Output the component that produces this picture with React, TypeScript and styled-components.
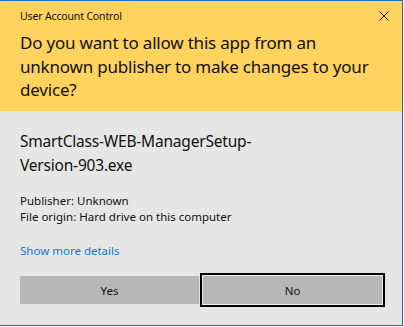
import React from 'react';
import styled, { createGlobalStyle } from 'styled-components';

const GlobalStyle = createGlobalStyle`
  html, body {
    margin: 0;
    padding: 0;
    background: #ffffff;
  }
  body {
    font-family: "Noto Sans", "Open Sans", sans-serif;
    color: #000;
  }
`;

const Page = styled.div`
  width: 404px;
  height: 327px;
  overflow: hidden;
`;

const Window = styled.div`
  width: 403px;
  height: 326px;
  box-sizing: border-box;
  border-top: 1px solid #1a6fc4;
  border-right: 1px solid #1a6fc4;
  border-bottom: 1px solid #1a6fc4;
  display: flex;
  flex-direction: column;
  background: #e6e6e6;
`;

const Header = styled.header`
  background: #ffd35e;
  height: 110px;
  display: flex;
  flex-direction: column;
`;

const TitleBar = styled.div`
  height: 30px;
  display: flex;
  align-items: center;
  justify-content: space-between;
  padding-left: 20px;
`;

const Title = styled.span`
  font-size: 10.5px;
  letter-spacing: -0.15px;
  color: #111;
`;

const CloseButton = styled.button`
  width: 36px;
  height: 30px;
  border: none;
  background: transparent;
  padding: 0;
  display: flex;
  align-items: center;
  justify-content: center;
`;

const Headline = styled.h1`
  margin: 0;
  padding: 0 18px 0 20px;
  font-size: 17px;
  font-weight: normal;
  letter-spacing: -0.2px;
  line-height: 23.5px;
  color: #111;
`;

const Body = styled.main`
  flex: 1;
  display: flex;
  flex-direction: column;
  padding: 17.5px 20px 0 20px;
`;

const FileName = styled.div`
  max-width: 255px;
  font-size: 15.5px;
  letter-spacing: -0.2px;
  line-height: 24px;
  color: #111;
`;

const Meta = styled.div`
  margin-top: 16px;
  font-size: 11.5px;
  line-height: 16px;
  color: #111;
`;

const MoreLink = styled.a`
  margin-top: 18px;
  font-size: 11.5px;
  line-height: 16px;
  color: #1277d2;
  text-decoration: none;
`;

const Buttons = styled.div`
  margin-top: 17.5px;
  display: grid;
  grid-template-columns: 1fr 1fr;
  gap: 4px;
`;

const Button = styled.button<{ $focused?: boolean }>`
  height: 28px;
  border: none;
  background: #b7b7b7;
  font-family: "Noto Sans", "Open Sans", sans-serif;
  font-size: 11.5px;
  color: #111;
  padding: 0;
  box-shadow: ${(p) => (p.$focused ? '0 0 0 1px #ededed, 0 0 0 3px #000' : 'none')};
`;

const CloseIcon = () => (
  <svg width="10" height="10" viewBox="0 0 10 10">
    <path d="M0.5 0.5 L9.5 9.5 M9.5 0.5 L0.5 9.5" stroke="#222" strokeWidth="1" fill="none" />
  </svg>
);

const App = () => (
  <Page>
    <GlobalStyle />
    <Window>
      <Header>
        <TitleBar>
          <Title>User Account Control</Title>
          <CloseButton aria-label="Close">
            <CloseIcon />
          </CloseButton>
        </TitleBar>
        <Headline>
          Do you want to allow this app from an unknown publisher to make changes to your device?
        </Headline>
      </Header>
      <Body>
        <FileName>SmartClass-WEB-ManagerSetup-Version-903.exe</FileName>
        <Meta>
          Publisher: Unknown
          <br />
          File origin: Hard drive on this computer
        </Meta>
        <MoreLink href="#">Show more details</MoreLink>
        <Buttons>
          <Button>Yes</Button>
          <Button $focused>No</Button>
        </Buttons>
      </Body>
    </Window>
  </Page>
);

export default App;
